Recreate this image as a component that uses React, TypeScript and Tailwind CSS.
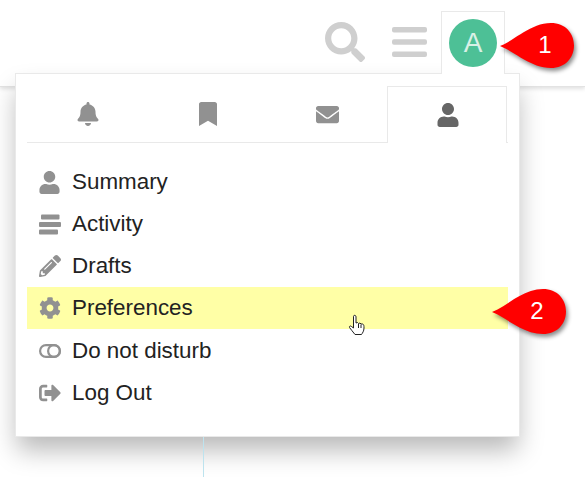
import React from 'react';
import {
  FaBell,
  FaBookmark,
  FaCog,
  FaEnvelope,
  FaPencilAlt,
  FaSearch,
  FaSignOutAlt,
  FaUser,
} from 'react-icons/fa';

const ActivityIcon = () => (
  <svg width="22" height="21" viewBox="0 0 22 21" fill="#919191">
    <rect x="2" y="0.5" width="18.5" height="5" rx="1" />
    <rect x="0" y="8" width="22" height="5" rx="1" />
    <rect x="0" y="15.5" width="19" height="5" rx="1" />
  </svg>
);

const ToggleIcon = () => (
  <svg width="22" height="14" viewBox="0 0 22 14" fill="none" stroke="#919191" strokeWidth="2.2">
    <rect x="1.1" y="1.1" width="19.8" height="11.8" rx="5.9" />
    <circle cx="15" cy="7" r="5.9" />
  </svg>
);

const Callout = ({ label }: { label: string }) => (
  <div className="relative h-[46px] w-[76px]">
    <svg width="76" height="50" viewBox="0 0 76 50" className="absolute left-0 top-0 drop-shadow-[2px_3px_2px_rgba(0,0,0,0.45)]">
      <path d="M1 24 C 16 18, 32 1, 52 1 C 66 1, 75 11, 75 23.5 C 75 36, 66 46, 52 46 C 32 46, 16 30, 1 24 Z" fill="#ff0000" />
    </svg>
    <span className="absolute left-[32px] top-0 flex h-[46px] w-[28px] items-center justify-center text-[24px] text-white">
      {label}
    </span>
  </div>
);

const items = [
  { label: 'Summary', icon: <FaUser size={23} color="#919191" /> },
  { label: 'Activity', icon: <ActivityIcon /> },
  { label: 'Drafts', icon: <FaPencilAlt size={22} color="#919191" /> },
  { label: 'Preferences', icon: <FaCog size={22} color="#919191" />, active: true },
  { label: 'Do not disturb', icon: <ToggleIcon />, pushed: true },
  { label: 'Log Out', icon: <FaSignOutAlt size={22} color="#919191" /> },
];

const tabs = [
  <FaBell size={24} color="#919191" />,
  <FaBookmark size={24} color="#919191" />,
  <FaEnvelope size={23} color="#919191" />,
];

export default function App() {
  return (
    <div className="relative h-[477px] w-[585px] overflow-hidden bg-white font-['Liberation_Sans',Arial,sans-serif]">
      {/* Header */}
      <header className="flex h-[87px] items-start justify-end border-b border-[#e3e3e3] pr-[80px] pt-[11px] shadow-[0_2px_4px_rgba(0,0,0,0.12)]">
        <div className="flex h-[62px] items-center gap-[27px] pr-[14px]">
          <FaSearch size={40} color="#cfcfcf" />
          <svg width="35" height="30" viewBox="0 0 35 30" fill="#cfcfcf">
            <rect x="0" y="0" width="35" height="5.5" rx="2" />
            <rect x="0" y="12.2" width="35" height="5.5" rx="2" />
            <rect x="0" y="24.5" width="35" height="5.5" rx="2" />
          </svg>
        </div>
        <div className="relative z-20 flex h-[63px] w-[64px] justify-center border border-b-0 border-[#e9e9e9] bg-white pt-[7px]">
          <div className="flex h-[48px] w-[48px] items-center justify-center rounded-full bg-[#4dc096] text-[28px] text-[#d8f0e6]">
            A
          </div>
        </div>
      </header>

      {/* Thin rule showing below the menu */}
      <div className="relative z-20 ml-[203px] mt-[350px] h-[40px] w-px bg-[#bde3ee]" />

      {/* User menu */}
      <div className="absolute left-[15px] top-[73px] z-10 h-[364px] w-[505px] border border-[#e9e9e9] bg-white px-[11px] pt-[12px] shadow-[0_15px_24px_-2px_rgba(0,0,0,0.28)]">
        <div className="flex h-[57px] border-b border-[#e9e9e9]">
          {tabs.map((icon, index) => (
            <div key={index} className="flex w-[120px] items-center justify-center pl-[1px]">
              {icon}
            </div>
          ))}
          <div className="-mb-px flex h-[57px] w-[120px] items-center justify-center border border-b-0 border-[#e9e9e9] bg-white pl-[1px]">
            <FaUser size={24} color="#666666" />
          </div>
        </div>

        <ul className="mt-[18px]">
          {items.map((item) => (
            <li
              key={item.label}
              className={`flex h-[42px] items-center text-[22.4px] text-[#222222] ${item.active ? 'bg-[#ffffa6]' : ''} ${item.pushed ? 'mt-[1px]' : ''}`}
            >
              <span className="flex w-[45px] items-center justify-center">{item.icon}</span>
              {item.label}
            </li>
          ))}
        </ul>
      </div>

      {/* Annotations */}
      <div className="absolute left-[499px] top-[22px] z-30">
        <Callout label="1" />
      </div>
      <div className="absolute left-[491px] top-[288px] z-30">
        <Callout label="2" />
      </div>
      <svg width="18" height="22" viewBox="0 0 18 22" className="absolute left-[348px] top-[314px] z-30" fill="#ffffff" stroke="#222222" strokeWidth="1">
        <path d="M6 1.5 C7 1 8 1.5 8 3 L8 9 L9.5 8.5 L10.5 9.5 L12 9 L13 10 L14.5 10 C16 10.5 16 12 16 14 C16 17 14.5 19 13.5 20.5 L7 20.5 C5 18 3 15.5 1.5 13.5 C1 12 2.5 11.5 3.5 12.5 L5.5 14 L5.5 3 C5.5 2 5.5 1.8 6 1.5 Z" />
        <path d="M10.5 10 L10.5 14 M13 10.5 L13 14" fill="none" />
      </svg>
    </div>
  );
}
